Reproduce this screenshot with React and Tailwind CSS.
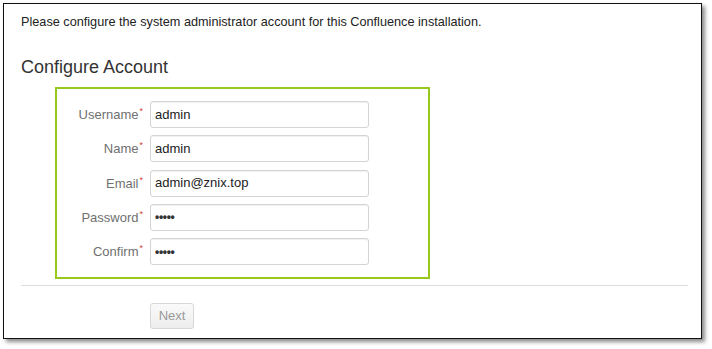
const fields = [
  { label: 'Username', value: 'admin' },
  { label: 'Name', value: 'admin' },
  { label: 'Email', value: 'admin@znix.top' },
  { label: 'Password', value: '•••••', secret: true },
  { label: 'Confirm', value: '•••••', secret: true },
];

function Field({ label, value, secret }) {
  return (
    <div className="flex items-center">
      <div className="w-[86px] text-right text-[13px] leading-none text-[#707070]">
        {label}
        <span className="relative -top-[5px] ml-[1px] text-[9px] text-[#d04437]">*</span>
      </div>
      <div className="ml-[7px] flex h-[27px] w-[219px] items-center rounded-[3px] border border-[#d4d4d4] bg-white pl-[4px] shadow-[inset_0_1px_1px_rgba(0,0,0,0.06)]">
        <span className={secret ? 'text-[12px] font-bold tracking-[-0.3px] text-[#333]' : 'text-[13px] text-[#222]'}>
          {value}
        </span>
      </div>
    </div>
  );
}

export default function App() {
  return (
    <div
      className="h-[349px] w-[712px] bg-white pl-[3px] pt-[3px]"
      style={{ fontFamily: "'Liberation Sans', Arial, sans-serif" }}
    >
      <div className="flex h-[336px] w-[699px] flex-col border border-[#111] bg-white pl-[17px] pr-[13px] pt-[10px] shadow-[3px_3px_4px_rgba(0,0,0,0.45)]">
        <p className="text-[12.7px] leading-[16px] text-[#222]">
          Please configure the system administrator account for this Confluence installation.
        </p>

        <h2 className="mt-[25px] text-[18px] leading-[24px] text-[#333]">Configure Account</h2>

        <div className="ml-[34px] mt-[8px] flex h-[192px] w-[375px] flex-col gap-[7.25px] border-2 border-[#97c81a] pt-[12px]">
          {fields.map((f) => (
            <Field key={f.label} {...f} />
          ))}
        </div>

        <div className="mt-[6px] h-px bg-[#dcdcdc]" />

        <div className="ml-[129px] mt-[17px]">
          <button
            type="button"
            className="h-[26px] w-[44px] rounded-[3px] border border-[#d8d8d8] bg-gradient-to-b from-[#fafafa] to-[#ededed] text-[13px] text-[#9a9a9a]"
          >
            Next
          </button>
        </div>
      </div>
    </div>
  );
}
